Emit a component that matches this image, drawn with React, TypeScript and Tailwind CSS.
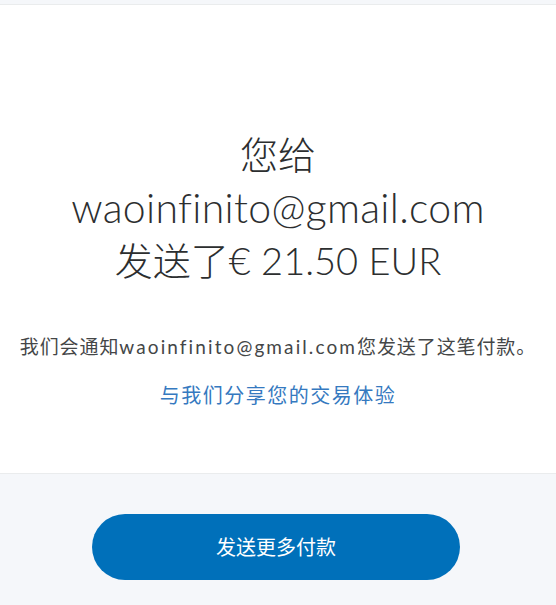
import React from "react";

export default function App() {
  const font = { fontFamily: 'Lato, "Noto Sans CJK SC", sans-serif' };
  return (
    <div className="w-full min-h-[605px] bg-[#f5f7fa]" style={font}>
      <div className="h-[5px] bg-[#f5f7fa] border-b border-[#eaeced]" />
      <div className="bg-white h-[469px] border-b border-[#eaeced] flex flex-col items-center pt-[123px]">
        <h1 className="text-[38px] leading-[53px] font-light text-[#2c2e2f] text-center">
          <div>您给</div>
          <div className="text-[41px] tracking-[0.3px]">waoinfinito@gmail.com</div>
          <div>发送了€ 21.50 EUR</div>
        </h1>
        <p className="mt-[48px] text-[19px] leading-[24px] tracking-[0.9px] text-[#444647] text-center whitespace-nowrap">
          我们会通知<span className="tracking-[2.1px]">waoinfinito@gmail.com</span>您发送了这笔付款。
        </p>
        <a className="mt-[24px] text-[20px] leading-[24px] tracking-[1.5px] text-[#3579c0] text-center">
          与我们分享您的交易体验
        </a>
      </div>
      <div className="flex justify-center pt-[40px] pr-[4px]">
        <button className="w-[368px] h-[66px] rounded-full bg-[#0070ba] text-white text-[20px]">
          发送更多付款
        </button>
      </div>
    </div>
  );
}
